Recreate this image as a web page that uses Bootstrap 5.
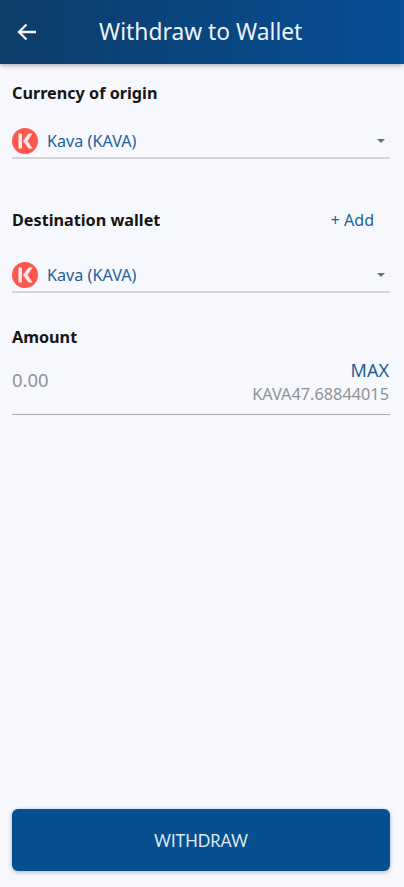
<!DOCTYPE html>
<html lang="en">
<head>
<meta charset="utf-8">
<meta name="viewport" content="width=device-width, initial-scale=1">
<link rel="stylesheet" href="https://cdn.jsdelivr.net/npm/bootstrap@5.3.0/dist/css/bootstrap.min.css">
<style>
html,body{height:100%}
body{background:#f6f8fd;font-family:"Noto Sans",sans-serif;overflow:hidden}
.app-shell{height:887px}
.top-bar{height:64px;background:linear-gradient(90deg,#0d3c68 0%,#064f96 100%);box-shadow:0 1px 5px rgba(0,0,0,.35);color:#eef3f8;padding-left:17px}
.bar-title{font-size:22.8px;margin-left:62px;line-height:1}
.page-body{padding:0 14px 0 12px}
.field-label{font-size:16.2px;font-weight:700;color:#151515;line-height:20px}
.picker{height:36px;padding-top:2px;margin-top:20px;border-bottom:2px solid #d3d5da;color:#1f5f98;font-size:16.2px}
.picker-low{margin-top:27px}
.coin{width:26px;height:26px;flex:none;margin-right:9px}
.caret-mark{width:0;height:0;border-left:4px solid transparent;border-right:4px solid transparent;border-top:4px solid #6b6f76;margin-right:5px}
.add-link{font-size:16px;color:#1f5f98;margin-right:16px;line-height:20px}
.amount-row{border-bottom:1px solid #a9abb0;height:64px;margin-top:4px;padding-top:8px}
.amount-zero{font-size:18.5px;color:#8f9296;line-height:26px;margin-top:8px}
.amount-side{margin-right:1px}
.max-link{font-size:18px;color:#1f5f98;line-height:22px}
.balance-text{font-size:16.3px;color:#8f9296;line-height:20px;margin-top:3px}
.withdraw-btn{height:62px;padding-top:8px;background:#07508f;border:0;border-radius:6px;color:#dfe8f0;font-family:Lato,sans-serif;font-size:16.4px;box-shadow:0 1px 4px rgba(0,0,0,.3)}
.withdraw-btn:hover{background:#07508f;color:#dfe8f0}
.sect-one{padding-top:19px}
.sect-two{padding-top:51px}
.sect-three{padding-top:34px}
</style>
</head>
<body>
<div class="app-shell d-flex flex-column">
  <header class="top-bar d-flex align-items-center">
    <svg width="20" height="18" viewBox="0 0 20 18" fill="none" stroke="#f3f6fa" stroke-width="2.4" aria-label="Back"><path d="M19 9H2M9.5 1.5 2 9l7.5 7.5"/></svg>
    <div class="bar-title">Withdraw to Wallet</div>
  </header>
  <main class="flex-grow-1 d-flex flex-column page-body">
    <section class="sect-one">
      <div class="field-label">Currency of origin</div>
      <div class="picker d-flex align-items-center">
        <svg class="coin" viewBox="0 0 26 26"><circle cx="13" cy="13" r="13" fill="#ff564f"/><path d="M6.5 5.5H10v15H6.5zM11 13l5.5-7.5h4L15.5 13l5 7.5h-4z" fill="#fdeceb"/></svg>
        <span class="flex-grow-1">Kava (KAVA)</span>
        <span class="caret-mark"></span>
      </div>
    </section>
    <section class="sect-two">
      <div class="d-flex justify-content-between">
        <div class="field-label">Destination wallet</div>
        <div class="add-link">+ Add</div>
      </div>
      <div class="picker picker-low d-flex align-items-center">
        <svg class="coin" viewBox="0 0 26 26"><circle cx="13" cy="13" r="13" fill="#ff564f"/><path d="M6.5 5.5H10v15H6.5zM11 13l5.5-7.5h4L15.5 13l5 7.5h-4z" fill="#fdeceb"/></svg>
        <span class="flex-grow-1">Kava (KAVA)</span>
        <span class="caret-mark"></span>
      </div>
    </section>
    <section class="sect-three">
      <div class="field-label">Amount</div>
      <div class="amount-row d-flex justify-content-between align-items-start">
        <div class="amount-zero">0.00</div>
        <div class="text-end amount-side">
          <div class="max-link">MAX</div>
          <div class="balance-text">KAVA47.68844015</div>
        </div>
      </div>
    </section>
    <button type="button" class="btn withdraw-btn w-100 mt-auto mb-3">WITHDRAW</button>
  </main>
</div>
<script src="https://cdn.jsdelivr.net/npm/bootstrap@5.3.0/dist/js/bootstrap.bundle.min.js"></script>
</body>
</html>
